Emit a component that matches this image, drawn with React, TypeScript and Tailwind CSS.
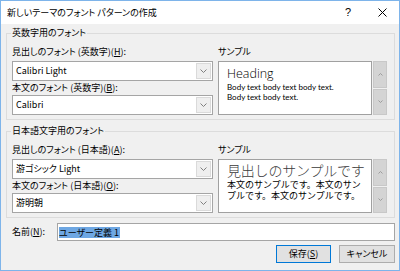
import type { ReactNode } from 'react'

// access key letter, underlined like the Win32 dialog
const K = ({ c }: { c: string }) => <span className="underline underline-offset-[1px]">{c}</span>

function Combo({ value }: { value: string }) {
  return (
    <div className="flex h-[20px] w-[201px] border border-[#a5a5a5] bg-white">
      <div className="flex flex-1 items-center pl-[3px] leading-[12px]">{value}</div>
      <div className="m-[1px] flex w-[15px] items-center justify-center border border-[#dadada] bg-[#efefef]">
        <svg width="7" height="4" viewBox="0 0 7 4">
          <path d="M0.5 0.5 L3.5 3.5 L6.5 0.5" fill="none" stroke="#808080" strokeWidth="1" />
        </svg>
      </div>
    </div>
  )
}

function ScrollBtns() {
  return (
    <div className="flex h-[54px] w-[14px] flex-col gap-[1px]">
      <div className="flex flex-1 items-center justify-center border border-[#c8c8c8] bg-[#d4d4d4]">
        <svg width="5" height="3" viewBox="0 0 5 3">
          <path d="M0.5 2.5 L2.5 0.5 L4.5 2.5" fill="none" stroke="#9c9c9c" strokeWidth="1" />
        </svg>
      </div>
      <div className="flex flex-1 items-center justify-center border border-[#c8c8c8] bg-[#d4d4d4]">
        <svg width="5" height="3" viewBox="0 0 5 3">
          <path d="M0.5 0.5 L2.5 2.5 L4.5 0.5" fill="none" stroke="#9c9c9c" strokeWidth="1" />
        </svg>
      </div>
    </div>
  )
}

function Group({ title, children }: { title: string; children: ReactNode }) {
  return (
    <div className="relative flex h-[87px] border border-[#dcdcdc] pl-[5px] pr-[7px] pt-[12px]">
      <span className="absolute -top-[7px] left-[4px] bg-[#f0f0f0] px-[1px] leading-[12px]">{title}</span>
      {children}
    </div>
  )
}

function FontGroup({
  title, label1, key1, value1, label2, key2, value2, sample,
}: {
  title: string; label1: string; key1: string; value1: string
  label2: string; key2: string; value2: string; sample: ReactNode
}) {
  return (
    <Group title={title}>
      <div className="flex w-[201px] flex-col">
        <div className="h-[12px] leading-[12px]">{label1}(<K c={key1} />):</div>
        <div className="mt-[3px]"><Combo value={value1} /></div>
        <div className="mt-[1px] h-[12px] leading-[12px]">{label2}(<K c={key2} />):</div>
        <div className="mt-[1px]"><Combo value={value2} /></div>
      </div>
      <div className="ml-[5px] flex flex-col">
        <div className="h-[12px] leading-[12px]">サンプル</div>
        <div className="mt-[3px] flex gap-[1px]">
          <div className="h-[54px] w-[154px] overflow-hidden border border-[#a0a0a0] bg-white">{sample}</div>
          <ScrollBtns />
        </div>
      </div>
    </Group>
  )
}

export default function App() {
  return (
    <div className="flex h-[271px] w-[400px] flex-col border border-[#7eb4ea] bg-[#f0f0f0] font-['Noto_Sans_CJK_JP',sans-serif] text-[9px] text-black [font-feature-settings:'palt']">
      {/* title bar */}
      <div className="flex h-[23px] items-center bg-white">
        <div className="flex-1 pl-[6px] leading-[12px]">新しいテーマのフォント パターンの作成</div>
        <div className="flex h-full w-[34px] items-center justify-center font-['Liberation_Sans',sans-serif] text-[11px]">?</div>
        <div className="flex h-full w-[34px] items-center justify-center">
          <svg width="9" height="9" viewBox="0 0 9 9">
            <path d="M0.5 0.5 L8.5 8.5 M8.5 0.5 L0.5 8.5" stroke="#000" strokeWidth="1" />
          </svg>
        </div>
      </div>

      <div className="flex flex-col pl-[5px] pr-[4px]">
        <div className="mt-[9px]">
          <FontGroup
            title="英数字用のフォント"
            label1="見出しのフォント (英数字)" key1="H" value1="Calibri Light"
            label2="本文のフォント (英数字)" key2="B" value2="Calibri"
            sample={
              <div className="pl-[8px] pt-[4px]">
                <div className="font-['Open_Sans',sans-serif] text-[12.5px] font-light leading-[15px] text-black">Heading</div>
                <div className="mt-[1px] font-['Lato',sans-serif] text-[8px] leading-[10px]">Body text body text body text.</div>
                <div className="font-['Lato',sans-serif] text-[8px] leading-[10px]">Body text body text.</div>
              </div>
            }
          />
        </div>
        <div className="mt-[11px]">
          <FontGroup
            title="日本語文字用のフォント"
            label1="見出しのフォント (日本語)" key1="A" value1="游ゴシック Light"
            label2="本文のフォント (日本語)" key2="O" value2="游明朝"
            sample={
              <div className="pl-[8px] pt-[1px] [font-feature-settings:normal]">
                <div className="text-[14px] font-light leading-[18px] tracking-[-0.2px] text-[#3a3a3a]">見出しのサンプルです</div>
                <div className="text-[9px] leading-[11px]">本文のサンプルです。本文のサン</div>
                <div className="text-[9px] leading-[11px]">プルです。本文のサンプルです。</div>
              </div>
            }
          />
        </div>

        {/* name */}
        <div className="mt-[5px] flex items-center">
          <div className="w-[51px] pl-[6px] leading-[12px]">名前(<K c="N" />):</div>
          <div className="flex h-[18px] flex-1 items-center border border-[#a5a5a5] bg-white pl-[1px]">
            <span className="bg-[#6ea7e3] pr-[1px] leading-[11px]">ユーザー定義 1</span>
          </div>
        </div>

        {/* buttons */}
        <div className="mt-[4px] flex justify-end gap-[8px]">
          <div className="flex h-[18px] w-[55px] items-center justify-center border border-[#0078d7] bg-[#e1e1e1] leading-[12px]">
            保存(<K c="S" />)
          </div>
          <div className="flex h-[18px] w-[56px] items-center justify-center border border-[#adadad] bg-[#e1e1e1] leading-[12px]">
            キャンセル
          </div>
        </div>
      </div>
    </div>
  )
}
